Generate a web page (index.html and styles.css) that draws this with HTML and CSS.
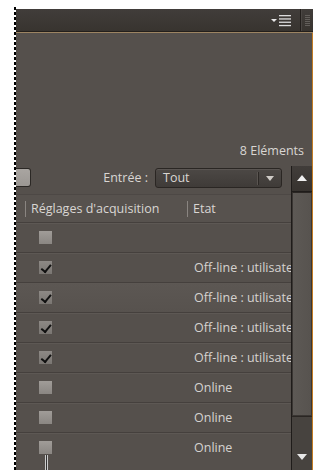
FILE: index.html
```html
<!DOCTYPE html>
<html lang="fr">
<head>
<meta charset="utf-8">
<link rel="stylesheet" href="styles.css">
</head>
<body>
<div class="page">
  <div class="dash"></div>
  <div class="panel">
    <div class="tabbar">
      <div class="menu-icon">
        <svg width="22" height="12" viewBox="0 0 22 12">
          <path d="M0 4 L6 4 L3 7 Z" fill="#e8e8e8"/>
          <rect x="8" y="0" width="12" height="1.3" fill="#dcdcdc"/>
          <rect x="8" y="3.3" width="12" height="1.3" fill="#dcdcdc"/>
          <rect x="8" y="6.6" width="12" height="1.3" fill="#dcdcdc"/>
          <rect x="8" y="9.9" width="12" height="1.3" fill="#dcdcdc"/>
        </svg>
      </div>
      <div class="tab-sep"></div>
      <div class="grip"></div>
    </div>
    <div class="body">
      <div class="count">8 Eléments</div>
      <div class="main">
        <div class="table-area">
          <div class="toolbar">
            <div class="stub-btn"></div>
            <span class="label">Entrée :</span>
            <div class="select">
              <span class="select-text">Tout</span>
              <span class="select-arrow"></span>
            </div>
          </div>
          <div class="thead">
            <span class="col-sep"></span>
            <span class="th th-acq">Réglages d'acquisition</span>
            <span class="col-sep"></span>
            <span class="th">Etat</span>
          </div>
          <div class="rows">
            <div class="row"><span class="cell-chk"><span class="chk"></span></span><span class="cell-state"></span></div>
            <div class="row"><span class="cell-chk"><span class="chk on"></span></span><span class="cell-state">Off-line : utilisateur</span></div>
            <div class="row hl"><span class="cell-chk"><span class="chk on"></span></span><span class="cell-state">Off-line : utilisateur</span></div>
            <div class="row"><span class="cell-chk"><span class="chk on"></span></span><span class="cell-state">Off-line : utilisateur</span></div>
            <div class="row"><span class="cell-chk"><span class="chk on"></span></span><span class="cell-state">Off-line : utilisateur</span></div>
            <div class="row"><span class="cell-chk"><span class="chk"></span></span><span class="cell-state">Online</span></div>
            <div class="row"><span class="cell-chk"><span class="chk"></span></span><span class="cell-state">Online</span></div>
            <div class="row"><span class="cell-chk"><span class="chk"></span></span><span class="cell-state">Online</span></div>
          </div>
          <div class="resize-mark"></div>
        </div>
        <div class="scrollbar">
          <div class="sb-up"></div>
          <div class="sb-thumb"></div>
          <div class="sb-track"><span class="sb-down"></span></div>
        </div>
      </div>
    </div>
  </div>
</div>
</body>
</html>
```
FILE: styles.css
```css
html, body {
  margin: 0;
  padding: 0;
  background: #ffffff;
  width: 318px;
  height: 470px;
  overflow: hidden;
}
body {
  font-family: "Open Sans", "Liberation Sans", sans-serif;
  font-size: 12.5px;
  color: #d6d3d0;
}
.page {
  display: flex;
  padding-left: 14px;
  padding-top: 9px;
  height: 461px;
  width: 299px;
}
.dash {
  width: 2px;
  flex: none;
  background: repeating-linear-gradient(to bottom, #000 0, #000 3px, #fff 3px, #fff 5px);
  margin-top: -2px;
}
.panel {
  flex: 1;
  display: flex;
  flex-direction: column;
  min-width: 0;
}
.tabbar {
  height: 22px;
  display: flex;
  align-items: center;
  justify-content: flex-end;
  background: linear-gradient(#413d3a, #38342f);
  border-bottom: 1px solid #231f1c;
  box-shadow: 0 1px 0 #9c8462;
  position: relative;
  z-index: 1;
}
.menu-icon {
  display: flex;
  margin-right: 7px;
  margin-top: 2px;
}
.tab-sep {
  width: 1px;
  align-self: stretch;
  background: #221e1b;
  box-shadow: 1px 0 0 #4b4744;
}
.grip {
  width: 5px;
  height: 11px;
  margin: 0 3px 0 4px;
  background: repeating-linear-gradient(to bottom, #6c6864 0, #6c6864 1px, transparent 1px, transparent 2px);
  opacity: .8;
}
.body {
  flex: 1;
  margin-top: 1px;
  background: #55504c;
  border-right: 1px solid #c27c24;
  display: flex;
  flex-direction: column;
  min-height: 0;
}
.count {
  text-align: right;
  padding: 110px 8px 0 0;
  line-height: 16px;
  height: 16px;
  color: #d9d6d3;
}
.main {
  flex: 1;
  display: flex;
  margin-top: 7px;
  min-height: 0;
}
.table-area {
  flex: 1;
  min-width: 0;
  display: flex;
  flex-direction: column;
  position: relative;
  overflow: hidden;
}
.toolbar {
  height: 28px;
  display: flex;
  align-items: flex-start;
  padding-top: 2px;
  box-sizing: border-box;
}
.stub-btn {
  width: 14px;
  height: 17px;
  background: linear-gradient(#a9a5a1, #9b9793);
  border: 1px solid #2b2825;
  border-left: none;
  border-radius: 0 3px 3px 0;
}
.label {
  margin-left: auto;
  line-height: 20px;
  color: #d9d6d3;
}
.select {
  margin-left: 7px;
  margin-right: 9px;
  width: 127px;
  height: 20px;
  box-sizing: border-box;
  border: 1px solid #2a2623;
  border-radius: 3px;
  background: linear-gradient(#4c4845, #3f3b38);
  box-shadow: inset 0 1px 0 #5a5552;
  display: flex;
  align-items: center;
}
.select-text {
  flex: 1;
  padding-left: 7px;
  color: #d9d6d3;
  line-height: 18px;
}
.select-arrow {
  width: 22px;
  height: 13px;
  border-left: 1px solid #2c2825;
  box-shadow: -1px 0 0 #5a5551;
  position: relative;
}
.select-arrow::after {
  content: "";
  position: absolute;
  left: 7px;
  top: 4px;
  border-left: 4px solid transparent;
  border-right: 4px solid transparent;
  border-top: 5px solid #cfcbc7;
}
.thead {
  height: 28px;
  display: flex;
  align-items: center;
  background: #57524e;
  border-top: 1px solid #4d4845;
  box-sizing: border-box;
}
.col-sep {
  width: 1px;
  height: 16px;
  background: #8a8581;
  margin-left: 9px;
  flex: none;
}
.th {
  padding-left: 5px;
  color: #d9d6d3;
}
.th-acq {
  width: 161px;
  flex: none;
  box-sizing: border-box;
  white-space: nowrap;
}
.th-acq + .col-sep {
  margin-left: 0;
}
.rows {
  display: flex;
  flex-direction: column;
}
.row {
  height: 30px;
  box-sizing: border-box;
  border-top: 1px solid #45403d;
  box-shadow: inset 0 1px 0 #5d5854;
  display: flex;
  align-items: center;
  background: #55504c;
}
.row.hl {
  background: linear-gradient(#5c5753, #57524e);
}
.cell-chk {
  width: 178px;
  flex: none;
  padding-left: 23px;
  box-sizing: border-box;
  display: flex;
}
.chk {
  width: 13px;
  height: 13px;
  background: linear-gradient(#a09c98, #8a8682);
  position: relative;
}
.chk.on {
  background: linear-gradient(#8d8985, #7a7672);
}
.chk.on::after {
  content: "";
  position: absolute;
  left: 2px;
  top: 1px;
  width: 4px;
  height: 8px;
  border-right: 2px solid #111;
  border-bottom: 2px solid #111;
  transform: rotate(40deg) translate(2px, -1px);
}
.cell-state {
  white-space: nowrap;
  color: #d6d3d0;
}
.resize-mark {
  position: absolute;
  left: 29px;
  bottom: 0;
  width: 1px;
  height: 15px;
  border-left: 1px solid #ccc;
  border-right: 1px solid #ccc;
  background: #333;
}
.scrollbar {
  width: 20px;
  flex: none;
  border-left: 1px solid #1f1c1a;
  display: flex;
  flex-direction: column;
}
.sb-up {
  height: 25px;
  background: linear-gradient(#413d3a, #37332f);
  border-bottom: 1px solid #1f1c1a;
  position: relative;
}
.sb-up::after {
  content: "";
  position: absolute;
  left: 5px;
  top: 9px;
  border-left: 5px solid transparent;
  border-right: 5px solid transparent;
  border-bottom: 6px solid #f0f0f0;
}
.sb-thumb {
  height: 224px;
  background: linear-gradient(to right, #5d5955, #57534f);
  border: 1px solid #3a3633;
  border-top-color: #2a2623;
  box-sizing: border-box;
}
.sb-track {
  flex: 1;
  background: #47433f;
  border-top: 1px solid #2a2623;
  position: relative;
}
.sb-down {
  position: absolute;
  left: 5px;
  bottom: 10px;
  border-left: 5px solid transparent;
  border-right: 5px solid transparent;
  border-top: 6px solid #e8e8e8;
}
```
